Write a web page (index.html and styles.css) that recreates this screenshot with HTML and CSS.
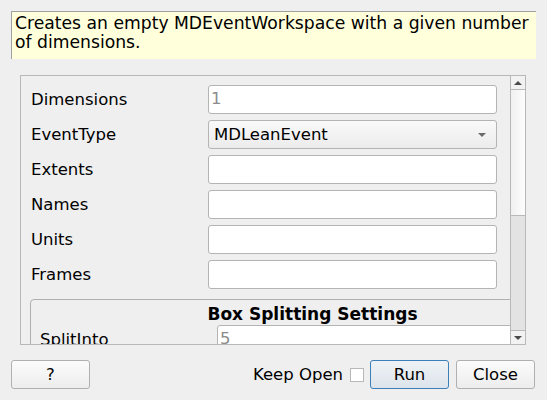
FILE: index.html
```html
<!DOCTYPE html>
<html>
<head>
<meta charset="utf-8">
<link rel="stylesheet" href="styles.css">
</head>
<body>
<div class="dialog">
  <div class="desc">Creates an empty MDEventWorkspace with a given number of dimensions.</div>
  <div class="scrollarea">
    <div class="viewport">
      <div class="form">
        <div class="row"><span class="label">Dimensions</span><div class="input placeholder">1</div></div>
        <div class="row"><span class="label">EventType</span><div class="combo"><span>MDLeanEvent</span><span class="tri down"></span></div></div>
        <div class="row"><span class="label">Extents</span><div class="input"></div></div>
        <div class="row"><span class="label">Names</span><div class="input"></div></div>
        <div class="row"><span class="label">Units</span><div class="input"></div></div>
        <div class="row"><span class="label">Frames</span><div class="input"></div></div>
      </div>
      <div class="groupbox">
        <div class="gtitle">Box Splitting Settings</div>
        <div class="row grow"><span class="label">SplitInto</span><div class="input wide placeholder">5</div></div>
      </div>
    </div>
    <div class="scrollbar">
      <div class="sbtn"><span class="tri up dark"></span></div>
      <div class="thumb"></div>
      <div class="trough"></div>
      <div class="sbtn bottom"><span class="tri down dark"></span></div>
    </div>
  </div>
  <div class="buttons">
    <button class="btn">?</button>
    <div class="spacer"></div>
    <span class="keep">Keep Open</span>
    <span class="check"></span>
    <button class="btn default">Run</button>
    <button class="btn">Close</button>
  </div>
</div>
</body>
</html>
```
FILE: styles.css
```css
html, body {
  margin: 0;
  padding: 0;
  background: #efefef;
}
body {
  font-family: "DejaVu Sans", sans-serif;
  font-size: 16.5px;
  color: #000;
  width: 547px;
  height: 400px;
  overflow: hidden;
}
.dialog {
  display: flex;
  flex-direction: column;
  padding: 11px 11px 0 11px;
}
.desc {
  background: #ffffdc;
  border-top: 1px solid #a0a0a0;
  border-left: 1px solid #a0a0a0;
  padding: 2px 0 0 3px;
  font-size: 17.2px;
  line-height: 19px;
  box-sizing: border-box;
  height: 48px;
}
.scrollarea {
  margin: 16px 10px 0 9px;
  height: 270px;
  border: 1px solid #b8b8b8;
  display: flex;
  box-sizing: border-box;
}
.viewport {
  flex: 1;
  overflow: hidden;
  padding: 9px 0 0 10px;
  position: relative;
}
.form {
  display: flex;
  flex-direction: column;
  gap: 6px;
}
.row {
  display: flex;
  align-items: center;
  height: 29px;
}
.label {
  width: 177px;
  flex: none;
}
.input {
  width: 289px;
  height: 29px;
  box-sizing: border-box;
  border: 1px solid #b4b4b4;
  border-radius: 3px;
  background: #fff;
  padding: 3px 2px 0 2px;
  flex: none;
}
.placeholder {
  color: #8c8c8c;
}
.combo {
  width: 289px;
  height: 29px;
  box-sizing: border-box;
  border: 1px solid #b4b4b4;
  border-radius: 3px;
  background: linear-gradient(#f9f9f9, #ececec);
  padding: 0 10px 0 5px;
  display: flex;
  align-items: center;
  justify-content: space-between;
  flex: none;
}
.tri {
  width: 0;
  height: 0;
  border-left: 4px solid transparent;
  border-right: 4px solid transparent;
}
.tri.down {
  border-top: 4px solid #6a6a6a;
}
.tri.up {
  border-bottom: 4px solid #4a4a4a;
}
.tri.down.dark {
  border-top-color: #4a4a4a;
}
.groupbox {
  margin: 10px 0 0 -1px;
  width: 565px;
  height: 80px;
  border: 1px solid #b0b0b0;
  border-radius: 4px;
  padding: 4px 0 0 9px;
  box-sizing: border-box;
  background: #efefef;
}
.gtitle {
  font-weight: bold;
  font-size: 17px;
  text-align: center;
  line-height: 20px;
  height: 20px;
  padding-right: 9px;
}
.grow {
  margin-top: 1px;
  align-items: flex-start;
}
.grow .label {
  padding-top: 5px;
}
.input.wide {
  width: 330px;
}
.scrollbar {
  width: 14px;
  border-left: 1px solid #b8b8b8;
  display: flex;
  flex-direction: column;
  flex: none;
}
.sbtn {
  height: 13px;
  border-bottom: 1px solid #b8b8b8;
  display: flex;
  align-items: center;
  justify-content: center;
  background: #f2f2f2;
}
.sbtn.bottom {
  border-bottom: none;
  border-top: 1px solid #b8b8b8;
}
.thumb {
  height: 125px;
  border-bottom: 1px solid #b8b8b8;
  background: linear-gradient(90deg, #f0f0f0, #fdfdfd);
}
.trough {
  flex: 1;
  background: #e3e3e3;
}
.buttons {
  display: flex;
  align-items: center;
  margin-top: 15px;
  margin-right: 1px;
}
.spacer {
  flex: 1;
}
.btn {
  font-family: "DejaVu Sans", sans-serif;
  font-size: 16.5px;
  color: #000;
  width: 79px;
  height: 29px;
  border: 1px solid #b0b0b0;
  border-radius: 3px;
  background: linear-gradient(#fbfbfb, #ededed);
  padding: 0;
  margin: 0;
}
.btn.default {
  border-color: #3a7fb8;
  background: linear-gradient(#eef2f6, #dde4eb);
  margin-right: 7px;
}
.keep {
  margin-right: 7px;
}
.check {
  width: 14px;
  height: 14px;
  box-sizing: border-box;
  border: 1px solid #b8b8b8;
  background: #fff;
  margin-right: 6px;
}
```
